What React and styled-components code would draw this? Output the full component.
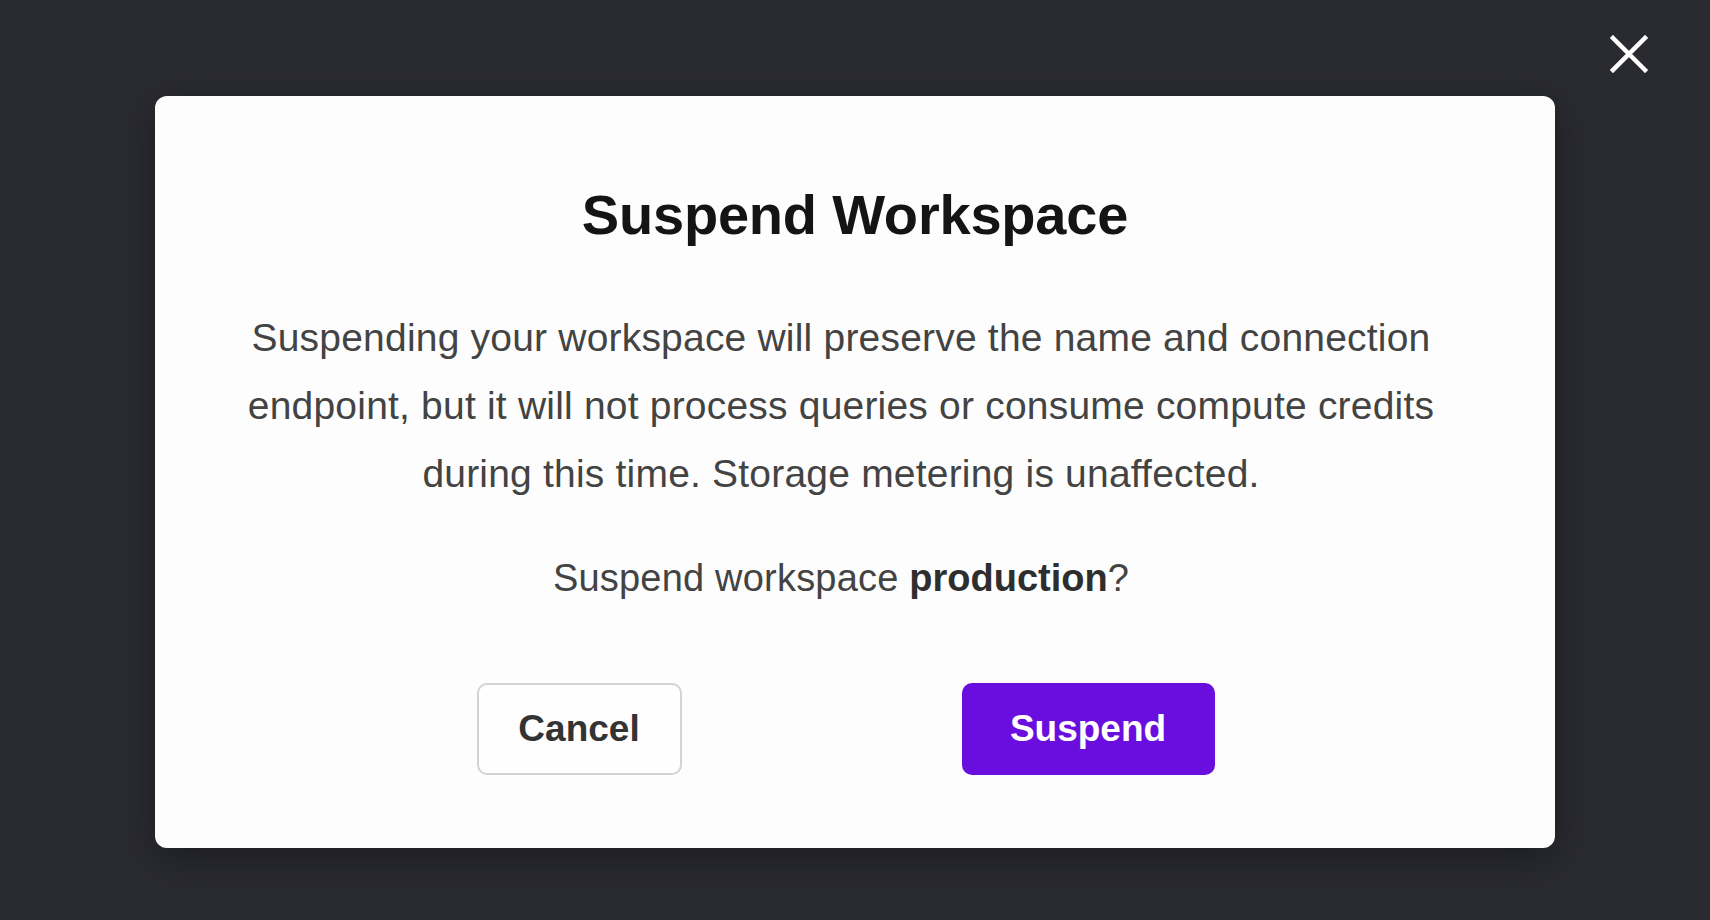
import React from "react";
import styled, { createGlobalStyle } from "styled-components";

const GlobalStyle = createGlobalStyle`
  html, body {
    margin: 0;
    padding: 0;
    height: 100%;
    background: #2a2b31;
    font-family: "Liberation Sans", Arial, sans-serif;
  }
`;

const Backdrop = styled.div`
  position: relative;
  min-height: 100vh;
  box-sizing: border-box;
  padding-top: 96px;
  display: flex;
  justify-content: center;
  align-items: flex-start;
  background: #2a2b31;
`;

const CloseButton = styled.button`
  position: absolute;
  top: 35px;
  right: 62px;
  width: 38px;
  height: 38px;
  padding: 0;
  border: 0;
  background: transparent;
  cursor: pointer;
  display: flex;
`;

const Dialog = styled.div`
  width: 1400px;
  box-sizing: border-box;
  background: #fdfdfd;
  border-radius: 12px;
  box-shadow: 0 10px 40px rgba(0, 0, 0, 0.35);
  padding: 85px 0 73px;
  display: flex;
  flex-direction: column;
  align-items: center;
`;

const Title = styled.h2`
  margin: 0;
  font-size: 56px;
  line-height: 1.2;
  font-weight: 700;
  color: #141414;
  letter-spacing: -0.2px;
`;

const Body = styled.div`
  display: flex;
  flex-direction: column;
  align-items: center;
  padding-right: 28px;
`;

const Text = styled.p`
  margin: ${(p) => p.$top}px 0 0;
  max-width: 1240px;
  font-size: ${(p) => p.$size}px;
  line-height: 68px;
  color: #434343;
  text-align: center;
  letter-spacing: 0.2px;

  strong {
    font-weight: 700;
    color: #2e2e2e;
    letter-spacing: 0;
  }
`;

const Actions = styled.div`
  display: flex;
  gap: 280px;
  margin-top: 71px;
  padding-left: 9px;
`;

const Button = styled.button`
  height: 92px;
  width: ${(p) => p.$w}px;
  box-sizing: border-box;
  border-radius: 10px;
  font-family: "Liberation Sans", Arial, sans-serif;
  font-size: 37px;
  font-weight: 700;
  cursor: pointer;
  border: ${(p) => (p.$primary ? "none" : "2px solid #d3d3d3")};
  background: ${(p) => (p.$primary ? "#6a0edf" : "#fefefe")};
  color: ${(p) => (p.$primary ? "#ffffff" : "#333333")};
`;

function CrossIcon() {
  return (
    <svg width="38" height="38" viewBox="0 0 38 38">
      <path d="M3 3 L35 35 M35 3 L3 35" stroke="#ffffff" strokeWidth="4.5" strokeLinecap="square" fill="none" />
    </svg>
  );
}

export default function App() {
  return (
    <>
      <GlobalStyle />
      <Backdrop>
        <CloseButton aria-label="Close">
          <CrossIcon />
        </CloseButton>
        <Dialog role="dialog">
          <Title>Suspend Workspace</Title>
          <Body>
            <Text $top={56} $size={39}>
              Suspending your workspace will preserve the name and connection endpoint, but it will not
              process queries or consume compute credits during this time. Storage metering is unaffected.
            </Text>
            <Text $top={36} $size={38}>
              Suspend workspace <strong>production</strong>?
            </Text>
            <Actions>
              <Button $w={205}>Cancel</Button>
              <Button $w={253} $primary>
                Suspend
              </Button>
            </Actions>
          </Body>
        </Dialog>
      </Backdrop>
    </>
  );
}
